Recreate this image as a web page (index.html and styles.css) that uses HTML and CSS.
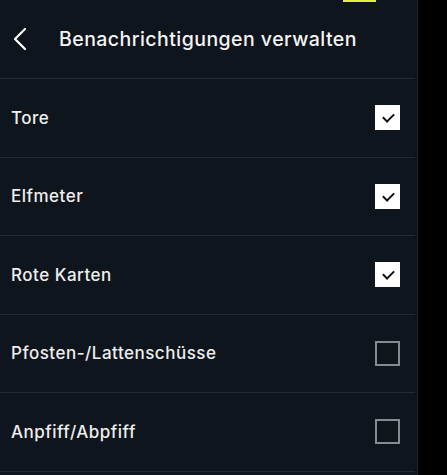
FILE: index.html
```html
<!DOCTYPE html>
<html lang="de">
<head>
    <meta charset="UTF-8">
    <meta name="viewport" content="width=device-width, initial-scale=1.0">
    <title>Benachrichtigungen verwalten</title>
    <link rel="stylesheet" href="styles.css">
</head>
<body>
    <div class="panel">
        <div class="top-marker"></div>

        <!-- Header -->
        <header class="header">
            <button class="back-btn" aria-label="Zurück">
                <svg width="18" height="26" viewBox="0 0 18 26">
                    <path d="M14 3 L4 13 L14 23" fill="none" stroke="#ffffff" stroke-width="2.2" stroke-linecap="round" stroke-linejoin="round"/>
                </svg>
            </button>
            <h1 class="title">Benachrichtigungen verwalten</h1>
        </header>

        <!-- Options -->
        <ul class="options">
            <li class="option">
                <span class="option-label">Tore</span>
                <span class="checkbox checked"></span>
            </li>
            <li class="option">
                <span class="option-label">Elfmeter</span>
                <span class="checkbox checked"></span>
            </li>
            <li class="option">
                <span class="option-label">Rote Karten</span>
                <span class="checkbox checked"></span>
            </li>
            <li class="option">
                <span class="option-label">Pfosten-/Lattenschüsse</span>
                <span class="checkbox"></span>
            </li>
            <li class="option">
                <span class="option-label">Anpfiff/Abpfiff</span>
                <span class="checkbox"></span>
            </li>
        </ul>
    </div>
</body>
</html>
```

FILE: styles.css
```css
* {
    margin: 0;
    padding: 0;
    box-sizing: border-box;
}

body {
    font-family: Inter, "Noto Sans", sans-serif;
    background: #000000;
    color: #f2f2f2;
    overflow: hidden;
}

.panel {
    width: 418px;
    height: 475px;
    background: #0f151c;
    border-right: 1px solid #1c2229;
    position: relative;
}

/* Yellow tab peeking at the top */
.top-marker {
    position: absolute;
    top: 0;
    left: 343px;
    width: 33px;
    height: 2px;
    background: #e3f03a;
}

/* Header */
.header {
    height: 79px;
    display: flex;
    align-items: center;
    padding-left: 11px;
    border-bottom: 1px solid #242b32;
    margin-right: 2px;
}

.back-btn {
    background: none;
    border: none;
    width: 48px;
    display: flex;
    align-items: center;
    cursor: pointer;
}

.title {
    font-size: 19.5px;
    font-weight: 500;
    letter-spacing: 0.45px;
    color: #f4f4f4;
}

/* Options */
.options {
    list-style: none;
    margin-right: 2px;
}

.option {
    height: 78.5px;
    display: flex;
    align-items: center;
    justify-content: space-between;
    padding: 0 15px 0 11px;
    border-bottom: 1px solid #242b32;
}

.option-label {
    font-size: 17px;
    font-weight: 500;
    letter-spacing: 0.5px;
    color: #eeeeee;
}

.checkbox {
    width: 25px;
    height: 25px;
    border: 2px solid #868b90;
    position: relative;
}

.checkbox.checked {
    background: #ffffff;
    border-color: #ffffff;
}

.checkbox.checked::after {
    content: "";
    position: absolute;
    left: 6px;
    top: 6px;
    width: 9px;
    height: 5px;
    border-left: 2px solid #111111;
    border-bottom: 2px solid #111111;
    transform: rotate(-45deg);
}
```
